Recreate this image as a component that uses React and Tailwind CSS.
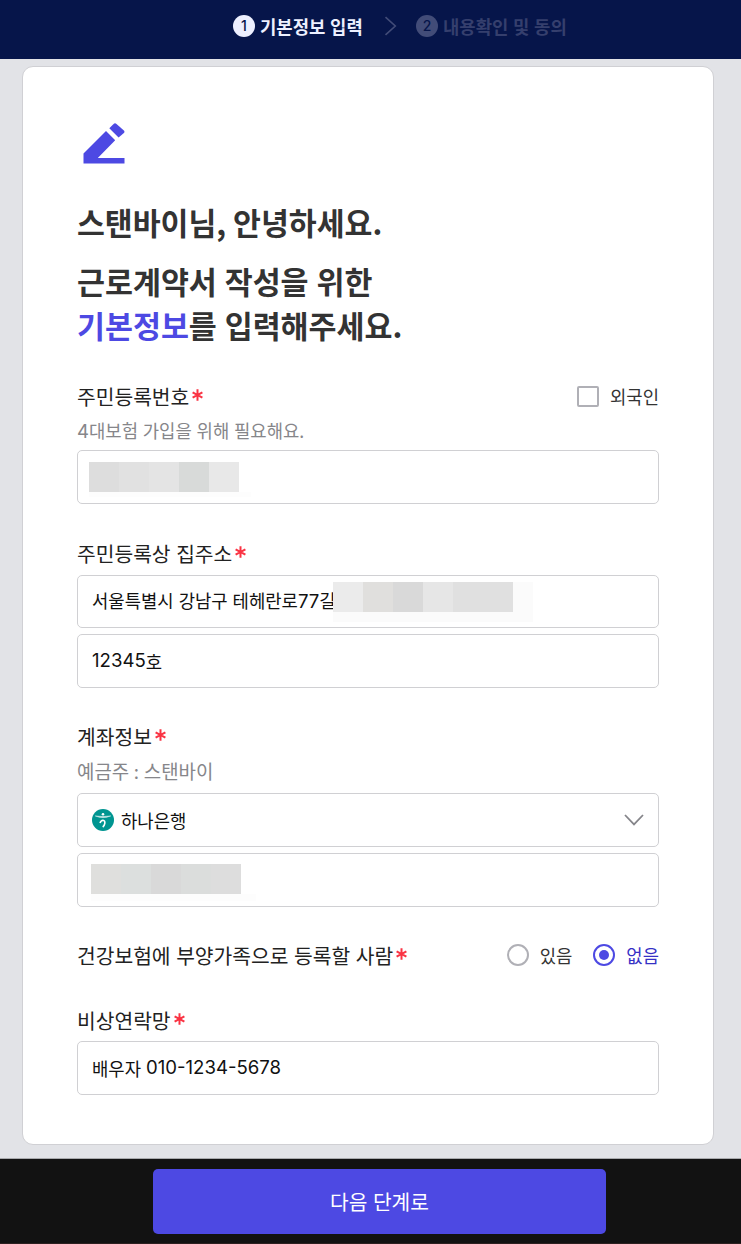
function StepBadge({ n, active }) {
  return (
    <span
      className={
        active
          ? "w-[22px] h-[22px] rounded-full bg-[#edf0ff] text-[#06154a] flex items-center justify-center font-['Inter','Noto_Sans_CJK_KR',sans-serif] font-medium text-[14px] leading-none"
          : "w-[22px] h-[22px] rounded-full bg-[#424c78] text-[#06154a] flex items-center justify-center font-['Inter','Noto_Sans_CJK_KR',sans-serif] font-medium text-[14px] leading-none"
      }
    >
      {n}
    </span>
  );
}

function PencilIcon() {
  return (
    <svg className="block w-[42px] h-[41px]" viewBox="0 0 42 41" fill="#4d49e3">
      <path d="M.5 40.5V30.4L23 8L32.2 17.2L14.8 35H41.5V40.5Z" />
      <path d="M26.3 5.2L30.6 .9Q32 -.4 33.5 .9L40.9 7.6Q42 8.8 40.9 10.1L35.6 14.6Z" />
    </svg>
  );
}

function Label({ children }) {
  return (
    <div className="flex h-[30px] items-center text-[20.35px] [word-spacing:1px] text-[#222] whitespace-nowrap">
      {children}
      <svg className="ml-[3px] mt-[-2px] w-[11px] h-[12px]" viewBox="0 0 11 12" stroke="#fa3343" strokeWidth="2">
        <path d="M5.5 .3v11.4M.6 3.3l9.8 5.4M10.4 3.3L.6 8.7" />
      </svg>
    </div>
  );
}

function Field({ className = "h-[54px]", children }) {
  return (
    <div
      className={`flex items-center shrink-0 rounded-[5px] border border-[#d0d0d3] bg-white px-[14px] text-[17.75px] [word-spacing:1px] text-[#111] whitespace-nowrap ${className}`}
    >
      {children}
    </div>
  );
}

function Num({ children }) {
  return <span className="font-['Inter','Noto_Sans_CJK_KR',sans-serif] text-[18.6px]">{children}</span>;
}

// masked personal data
function Mask({ className = "", colors }) {
  return (
    <div className={`flex ${className}`}>
      {colors.map((c, i) => (
        <span key={i} className="w-[30px] h-[30px]" style={{ background: c }} />
      ))}
    </div>
  );
}

export default function App() {
  return (
    <div className="w-[741px] h-[1244px] flex flex-col overflow-hidden bg-[#e2e3e7] font-['Noto_Sans_CJK_KR',sans-serif]">
      <header className="flex items-center h-[59px] shrink-0 bg-[#06154a] pl-[233px] pb-[7px] text-[17.75px] font-bold [word-spacing:0.7px] whitespace-nowrap">
        <StepBadge n="1" active />
        <span className="ml-[5px] w-[103px] text-[#edf0ff]">기본정보 입력</span>
        <svg className="ml-[21px] mr-[19px] w-[13px] h-[20px]" viewBox="0 0 13 20" fill="none" stroke="#424c78" strokeWidth="1.6">
          <path d="M1.5 1.2L11.3 10L1.5 18.8" />
        </svg>
        <StepBadge n="2" />
        <span className="ml-[5px] text-[#353f6d]">내용확인 및 동의</span>
      </header>

      <main className="flex flex-col mt-[7px] ml-[22px] w-[692px] h-[1079px] shrink-0 rounded-[11px] border border-[#d0d0d4] bg-white px-[54px] pt-[56px]">
        <div className="pl-[6px]">
          <PencilIcon />
        </div>

        <h1 className="mt-[36px] h-[44px] text-[30.3px] leading-[44px] font-bold text-[#333] whitespace-nowrap">
          스탠바이님, 안녕하세요.
        </h1>
        <h2 className="mt-[15px] h-[88px] text-[30.4px] leading-[44px] font-bold [word-spacing:1px] text-[#333] whitespace-nowrap">
          근로계약서 작성을 위한
          <br />
          <span className="text-[#4d49e3]">기본정보</span>를 입력해주세요.
        </h2>

        <section className="mt-[34px]">
          <div className="flex items-center justify-between">
            <Label>주민등록번호</Label>
            <div className="flex items-center pt-[1px] text-[17.75px] text-[#333]">
              <span className="w-[22px] h-[21px] mr-[11px] rounded-[2px] border-2 border-[#b0b0b6]" />
              외국인
            </div>
          </div>
          <p className="h-[39px] leading-[39px] text-[17.75px] [word-spacing:0.8px] text-[#86868a] whitespace-nowrap">
            <Num>4</Num>대보험 가입을 위해 필요해요.
          </p>
          <Field className="h-[54px] pl-[11px] pt-[2px]">
            <div className="w-[162px] h-[36px] pt-[2px]">
              <Mask colors={["#dddddd", "#e1e1e1", "#e4e4e4", "#d8dad9", "#e8e8e8"]} />
              <div className="h-[5px] bg-[#fdfdfd]" />
            </div>
          </Field>
        </section>

        <section className="mt-[34px]">
          <Label>주민등록상 집주소</Label>
          <Field className="mt-[7px] h-[53px]">
            <span className="w-[241px]">
              서울특별시 강남구 테헤란로<Num>77</Num>길
            </span>
            <div className="relative w-[200px] h-[40px] bg-[#fbfbfb]">
              <Mask colors={["#ebebeb", "#e0dfdd", "#d9d9d9", "#e6e6e6", "#e0e0e0", "#e0e0e0"]} />
            </div>
          </Field>
          <Field className="mt-[6px] h-[54px]">
            <Num>12345</Num>호
          </Field>
        </section>

        <section className="mt-[33px]">
          <Label>계좌정보</Label>
          <p className="h-[42px] leading-[40px] text-[18.9px] [word-spacing:0.5px] text-[#86868a]">예금주 : 스탠바이</p>
          <Field>
            <svg className="w-[22px] h-[22px] mr-[7px]" viewBox="0 0 22 22">
              <circle cx="11" cy="11" r="11" fill="#009591" />
              <circle cx="11" cy="5.3" r="1.3" fill="white" />
              <path d="M3.2 6.9Q11 8.1 18.8 6.9Q15 8.6 11 8.6Q7 8.6 3.2 6.9Z" fill="white" stroke="white" strokeWidth=".4" />
              <path d="M8 14Q8.8 11.4 11 11.2Q13.2 11.5 12.8 14.3Q12.4 16.8 10.7 18" fill="none" stroke="white" strokeWidth="1.6" />
            </svg>
            하나은행
            <svg className="ml-auto w-[20px] h-[12px]" viewBox="0 0 20 12" fill="none" stroke="#85858a" strokeWidth="1.8">
              <path d="M1 1L10 10.4L19 1" />
            </svg>
          </Field>
          <Field className="mt-[6px] h-[54px] pl-[13px] pt-[4px]">
            <div className="w-[165px] h-[37px]">
              <Mask colors={["#dfdfdd", "#dcdfde", "#d9d9d9", "#dbdddc", "#dddddd"]} />
              <div className="h-[7px] bg-[#fdfdfd]" />
            </div>
          </Field>
        </section>

        <section className="mt-[33px] flex items-center justify-between">
          <Label>건강보험에 부양가족으로 등록할 사람</Label>
          <div className="flex items-center text-[17.75px] text-[#333]">
            <span className="w-[22px] h-[22px] mr-[11px] rounded-full border-2 border-[#b0b0b6]" />
            있음
            <span className="w-[22px] h-[22px] ml-[21px] mr-[11px] rounded-full border-2 border-[#4d49e3] flex items-center justify-center">
              <span className="w-[10px] h-[10px] rounded-full bg-[#4d49e3]" />
            </span>
            <span className="text-[#3530c5]">없음</span>
          </div>
        </section>

        <section className="mt-[35px]">
          <Label>비상연락망</Label>
          <Field className="mt-[6px] h-[54px]">
            배우자&nbsp;<Num>010-1234-5678</Num>
          </Field>
        </section>
      </main>

      <footer className="mt-[13px] h-[86px] shrink-0 border-t border-t-[#a9aaad] border-b border-b-[#2c2020] bg-[#121212] pt-[10px] pl-[153px]">
        <button className="block w-[453px] h-[65px] rounded-[5px] bg-[#4d49e3] pb-[1px] text-[20.3px] [word-spacing:1px] text-white">
          다음 단계로
        </button>
      </footer>
    </div>
  );
}
